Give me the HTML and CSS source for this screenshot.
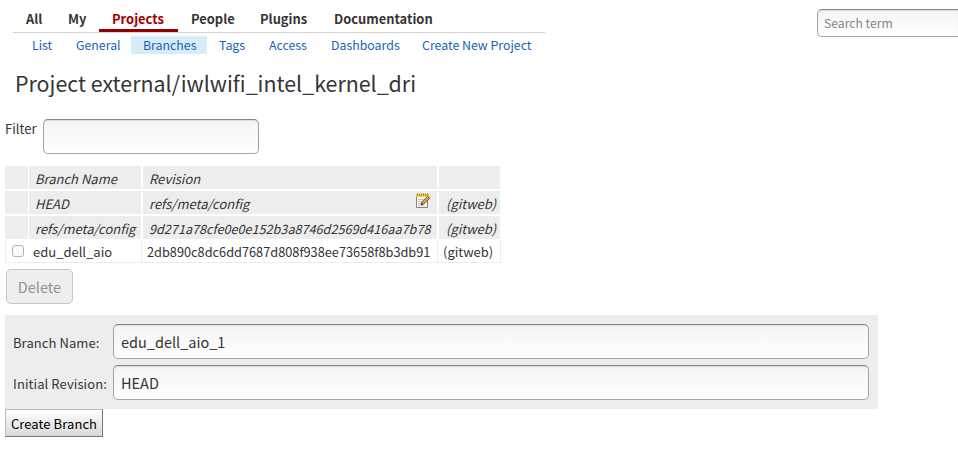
FILE: index.html
```html
<!DOCTYPE html>
<html lang="en">
<head>
<meta charset="utf-8">
<title>Project branches</title>
<link rel="stylesheet" href="styles.css">
</head>
<body>
<header class="top">
  <div class="menus">
    <nav class="menu">
      <a>All</a><a>My</a><a class="active">Projects</a><a>People</a><a>Plugins</a><a>Documentation</a>
    </nav>
    <nav class="submenu">
      <a>List</a><a>General</a><a class="active">Branches</a><a>Tags</a><a>Access</a><a>Dashboards</a><a>Create New Project</a>
    </nav>
  </div>
  <div class="field search">Search term</div>
</header>
<h1>Project external/iwlwifi_intel_kernel_dri</h1>
<main>
  <div class="filter"><label>Filter</label><div class="field"></div></div>
  <div class="branches">
    <div class="row head"><span></span><span>Branch Name</span><span>Revision</span><span></span></div>
    <div class="row head"><span></span><span>HEAD</span><span class="editable">refs/meta/config
      <svg class="edit" width="16" height="16" viewBox="0 0 16 16">
        <path d="M1.500 2.500h11v12h-11z" fill="#fafaf8" stroke="#85837d"/>
        <path d="M1 1h13v3H1z" fill="#edcb3c"/>
        <path d="M2.500 .5v2M4.500 .5v2M6.500 .5v2M8.500 .5v2M10.500 .5v2M12.500 .5v2" stroke="#9f8318"/>
        <path d="M3 6.500h6M3 8.500h4M3 10.500h3M3 12.500h7" stroke="#c5c5c2"/>
        <path d="M6 12l1-3 5.500-5.500 2.300 1.700-5.800 5.500z" fill="#dfa74b" stroke="#6b4516" stroke-width=".9"/>
        <path d="M6 12l.7-2 1.500 1z" fill="#33291c"/>
      </svg></span><span>(gitweb)</span></div>
    <div class="row head"><span></span><span>refs/meta/config</span><span class="hash">9d271a78cfe0e0e152b3a8746d2569d416aa7b78</span><span>(gitweb)</span></div>
    <div class="row item"><span class="check"><i class="box"></i></span><span>edu_dell_aio</span><span class="hash">2db890c8dc6dd7687d808f938ee73658f8b3db91</span><span>(gitweb)</span></div>
  </div>
  <div class="delete">Delete</div>
  <div class="form">
    <label>Branch Name:</label><div class="field">edu_dell_aio_1</div>
    <label>Initial Revision:</label><div class="field">HEAD</div>
  </div>
  <div class="create">Create Branch</div>
</main>
</body>
</html>
```
FILE: styles.css
```css
* { box-sizing: border-box; }
body {
  margin: 0;
  height: 454px;
  overflow: hidden;
  background: #fff;
  color: #353535;
  font: 13px/18px "Noto Sans CJK SC", "Noto Sans", sans-serif;
}
.top { display: flex; justify-content: space-between; height: 60px; }
.menus { width: 532px; margin-left: 13px; }
.menu {
  display: grid;
  grid-template-columns: 42px 44px 79px 69px 74px 124px;
  height: 33px;
  padding-top: 10px;
  border-bottom: 1px solid #d4d4d4;
  font-weight: bold;
  font-size: 12.9px;
}
.menu a { height: 22px; padding-left: 13px; white-space: nowrap; }
.menu .active { color: #a00000; border-bottom: 3px solid #970000; }
.submenu {
  display: grid;
  grid-template-columns: 44px 68px 76px 50px 62px 91px 129px;
  margin: 3px 0 0 6px;
  color: #1763bb;
  font-size: 12.35px;
}
.submenu a { padding-left: 12px; white-space: nowrap; }
.submenu a:first-child, .submenu a:nth-child(2) { padding-left: 13px; }
.submenu .active { background: #d8ebf9; }
.field {
  height: 35px;
  border: 1px solid #a6a6a6;
  border-top-color: #858585;
  border-radius: 5px;
  padding: 0 7px;
  background: linear-gradient(#f4f4f4, #fff);
  box-shadow: inset 0 1px 1px #ddd;
  font-size: 14.5px;
  line-height: 33px;
}
.search {
  width: 141px;
  height: 28px;
  margin-top: 9px;
  padding-left: 6px;
  border-right: 0;
  border-radius: 5px 0 0 5px;
  color: #858585;
  font-size: 12.2px;
  line-height: 27px;
}
h1 { margin: 7px 0 0 15px; font-size: 21.4px; font-weight: normal; line-height: 32px; white-space: nowrap; }
main { padding: 20px 0 0 5px; }
.filter { display: flex; height: 47px; }
.filter label { width: 38px; padding-top: 1px; font-size: 13.1px; }
.filter .field { width: 216px; }
.branches { width: 495px; font-size: 13px; }
.row { display: grid; white-space: nowrap; }
.head { grid-template: 23px / 24px 114px 296px 61px; height: 23px; margin-bottom: 2px; font-style: italic; line-height: 26px; }
.head span { background: #ededed; border-right: 2px solid #fff; padding-left: 6px; }
.head span:first-child { border-right-width: 1px; }
.head span:last-child { border-right: 0; padding-left: 7px; }
.head .hash { font-size: 12.65px; }
.editable { display: flex; justify-content: space-between; padding-right: 6px; }
.edit { margin-top: 2px; }
.item { grid-template: 22px / 23px 113px 296px 63px; width: 496px; height: 23px; margin-top: -1px; border-left: 1px solid #ededed; border-bottom: 1px solid #ededed; line-height: 24px; }
.item span { border-right: 1px solid #ededed; padding-left: 4px; }
.item .check { border: 0; padding: 5px 0 0 6px; }
.item .hash { padding-left: 5px; }
.item span:last-child { padding-left: 5px; }
.hash { font-size: 12.75px; }
.box { display: block; width: 12px; height: 12px; border: 1px solid #b1b1b1; border-radius: 3px; background: #fafafa; }
.delete { width: 67px; height: 35px; margin: 6px 0 0 1px; border: 1px solid #c5c5c5; border-radius: 5px; background: #eee; color: #929292; font-size: 14.5px; line-height: 33px; text-align: center; }
.form {
  display: grid;
  grid-template-columns: 100px 756px;
  grid-auto-rows: 35px;
  row-gap: 6px;
  width: 873px;
  height: 94px;
  margin-top: 11px;
  padding: 9px 8px;
  background: #ededed;
  line-height: 38px;
  white-space: nowrap;
}
.form label { letter-spacing: .08px; }
.create {
  width: 98px;
  height: 28px;
  border: 1px solid #bbb;
  border-right-color: #777;
  border-bottom-color: #777;
  background: linear-gradient(#fff, #d9d9d9);
  color: #000;
  letter-spacing: .08px;
  line-height: 28px;
  text-align: center;
  white-space: nowrap;
}
```
